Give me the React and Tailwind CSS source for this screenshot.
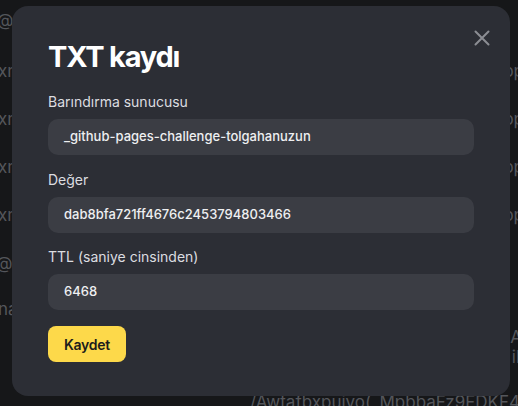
import React from "react";

export default function App() {
  return (
    <div className="relative w-[518px] h-[406px] overflow-hidden bg-[#161719]" style={{ fontFamily: "Inter, 'Noto Sans', sans-serif" }}>
      {/* background page (dimmed) */}
      <div className="flex flex-col pt-[8px] text-[#54565b] text-[17px] leading-[24px]">
        <div className="flex h-[49px] items-start justify-between"><span className="-ml-[3px]">@</span><span></span></div>
        {["xn", "xn", "xn", "xn"].map((t, i) => (
          <div key={i} className="flex h-[48px] items-start justify-between pt-[2px]">
            <span className="-ml-[2px]">{t}</span>
            <span className="-mr-[6px]">op</span>
          </div>
        ))}
        <div className="flex h-[48px] items-start justify-between pt-[2px]"><span className="-ml-[4px]">@</span><span></span></div>
        <div className="flex h-[28px] items-start justify-between"><span className="-ml-[2px]">na</span><span></span></div>
        <div className="flex h-[20px] items-start justify-end"><span className="-mr-[4px]">A</span></div>
        <div className="flex h-[45px] items-start justify-end"><span className="-mr-[2px]">il</span></div>
        <div className="pl-[250px] whitespace-nowrap">/Awtafbxpuivo(_MpbbaFz9FDKF4oK+</div>
      </div>

      {/* modal */}
      <div className="absolute left-[12px] top-[6px] w-[498px] h-[390px] rounded-[16px] bg-[#2c2e35] px-[36px] pt-[33px]">
        <button className="absolute right-[14px] top-[18px] w-[28px] h-[28px] flex items-center justify-center text-[#8b8d93]">
          <svg width="16" height="16" viewBox="0 0 16 16" fill="none" stroke="currentColor" strokeWidth="2" strokeLinecap="round">
            <path d="M1.5 1.5L14.5 14.5M14.5 1.5L1.5 14.5" />
          </svg>
        </button>
        <h2 className="text-[29px] leading-[36px] font-bold text-white tracking-[-1.2px]">TXT kaydı</h2>

        <div className="mt-[17px] flex flex-col">
          <label className="text-[14px] leading-[20px] text-[#dcdde0]">Barındırma sunucusu</label>
          <div className="mt-[7px] h-[36px] rounded-[10px] bg-[#3b3d44] px-[16px] flex items-center text-[13px] font-medium text-[#eeeff1]">_github-pages-challenge-tolgahanuzun</div>

          <label className="mt-[15px] text-[14px] leading-[20px] text-[#dcdde0]">Değer</label>
          <div className="mt-[7px] h-[36px] rounded-[10px] bg-[#3b3d44] px-[16px] flex items-center text-[13px] font-medium text-[#eeeff1]">dab8bfa721ff4676c2453794803466</div>

          <label className="mt-[14px] text-[14px] leading-[20px] text-[#dcdde0]">TTL (saniye cinsinden)</label>
          <div className="mt-[7px] h-[36px] rounded-[10px] bg-[#3b3d44] px-[16px] flex items-center text-[13px] font-medium text-[#eeeff1]">6468</div>
        </div>

        <button className="mt-[16px] h-[36px] px-[16px] rounded-[8px] bg-[#fdd94a] text-[14px] font-semibold tracking-[-0.3px] text-[#1c1c1c]">Kaydet</button>
      </div>
    </div>
  );
}
